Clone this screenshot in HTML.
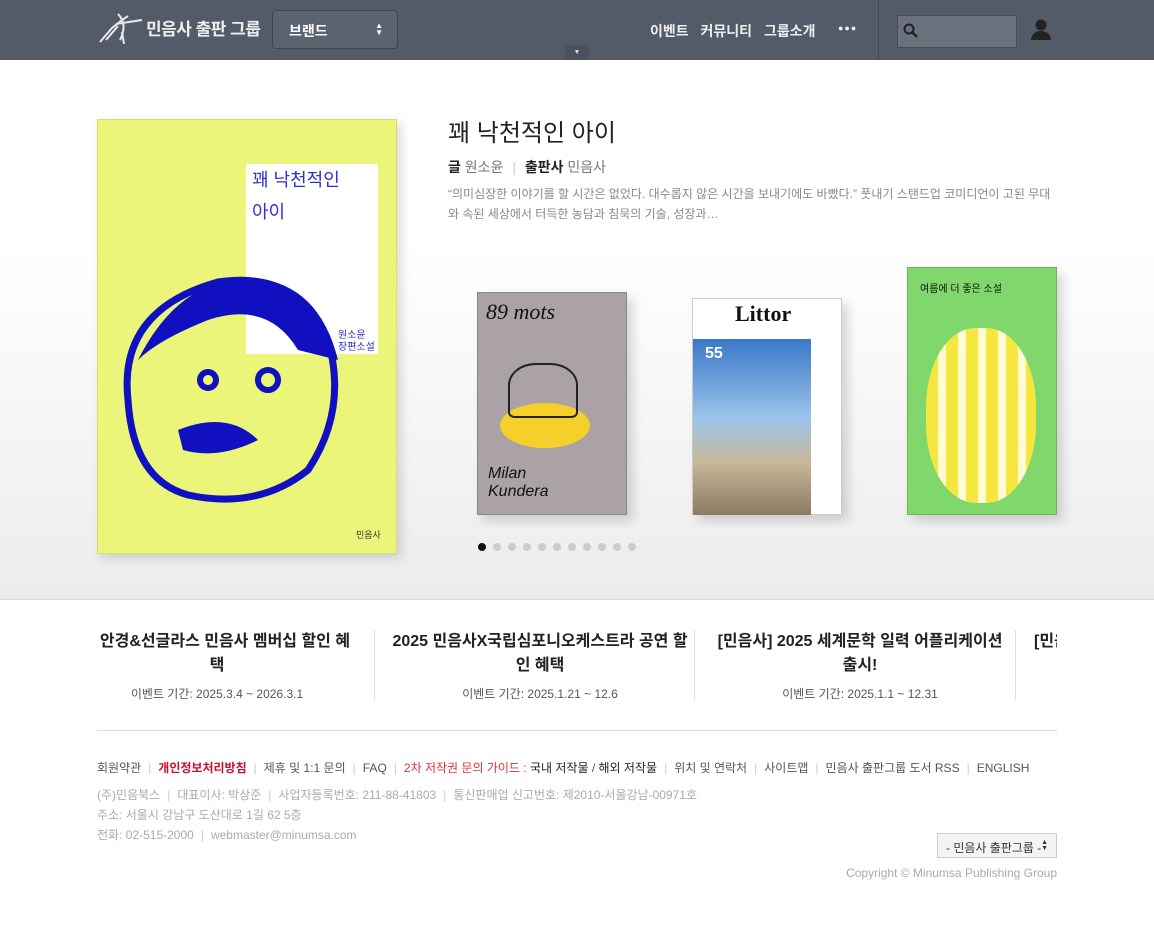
<!DOCTYPE html>
<html><head><meta charset="utf-8"><style>
*{margin:0;padding:0;box-sizing:border-box}
body{width:1154px;height:952px;overflow:hidden;font-family:"Liberation Sans","Noto Sans CJK KR",sans-serif;background:#fff;position:relative;color:#333}
.hdr{position:absolute;left:0;top:0;width:1154px;height:60px;background:#535a68}
.abs{position:absolute}
.main{position:absolute;top:60px;left:0;width:1154px;height:540px;background:linear-gradient(#fff 0%,#fff 35%,#ececec 100%);border-bottom:1px solid #d8d8d8}
.dot{position:absolute;top:483px;width:8px;height:8px;border-radius:50%;background:#ccc}
.ev{position:absolute;top:10px;width:320px;text-align:center}
.ev b{display:block;font-size:16px;color:#222;line-height:24px}
.ev span{display:block;font-size:12px;color:#555;margin-top:7px}
.ft{font-size:12px;color:#555;white-space:nowrap}
.ft i{font-style:normal;color:#ccc;margin:0 7px}
.g{color:#aaa}
</style></head><body>
<div class="hdr">
 <svg class="abs" style="left:98px;top:10px" width="46" height="34" viewBox="0 0 46 34"><g stroke="#e8e8e8" stroke-width="2" fill="none"><path d="M2 32 L14 18 L24 10 L30 6"/><path d="M8 30 L20 16"/><path d="M20 4 Q30 14 22 30"/><path d="M18 14 L44 10"/><path d="M24 22 L26 34"/></g></svg>
 <div class="abs" style="left:146px;top:15px;font-size:17px;font-weight:bold;color:#eee;letter-spacing:-0.5px">민음사 출판 그룹</div>
 <div class="abs" style="left:272px;top:10px;width:126px;height:39px;border:1px solid #3f4550;border-radius:4px;background:#5b6270;color:#fff;font-size:14px;font-weight:bold;padding:10px 0 0 16px">브랜드<span style="position:absolute;right:14px;top:11px;font-size:8px;line-height:7px">▲<br>▼</span></div>
 <div class="abs" style="left:565px;top:45px;width:24px;height:15px;background:#4a505d;border-radius:3px 3px 0 0;color:#ddd;font-size:7px;text-align:center;line-height:15px">▼</div>
 <div class="abs" style="left:650px;top:21px;font-size:14px;font-weight:bold;color:#eee;word-spacing:8px">이벤트 커뮤니티 그룹소개</div>
 <div class="abs" style="left:838px;top:23px;font-size:9px;color:#eee;letter-spacing:1px">●●●</div>
 <div class="abs" style="left:878px;top:0;width:1px;height:60px;background:#434955"></div>
 <div class="abs" style="left:897px;top:15px;width:120px;height:33px;background:#6a717d;border:1px solid #474d58"></div>
 <svg class="abs" style="left:903px;top:23px" width="16" height="16"><circle cx="6" cy="6" r="4.5" stroke="#222" stroke-width="2" fill="none"/><path d="M9 9 L14 14" stroke="#222" stroke-width="2.5"/></svg>
 <svg class="abs" style="left:1031px;top:19px" width="20" height="22"><circle cx="10" cy="6" r="5.5" fill="#222"/><path d="M0 21 Q1 12 10 12 Q19 12 20 21Z" fill="#222"/></svg>
</div>
<div class="main">
 <div class="abs" style="left:97px;top:59px;width:300px;height:435px;background:#eaf57a;border:1px solid #d8df70;box-shadow:4px 4px 10px rgba(0,0,0,.15);overflow:hidden">
  <div class="abs" style="left:148px;top:44px;width:132px;height:190px;background:#fff"></div>
  <div class="abs" style="left:154px;top:44px;font-size:18px;color:#3030d0;line-height:32px">꽤 낙천적인<br>아이</div>
  <div class="abs" style="left:240px;top:210px;font-size:10px;color:#3030c0;line-height:12px">원소윤<br>장편소설</div>
  <svg class="abs" style="left:0;top:150px" width="260" height="240"><path d="M30 130 Q20 40 120 12 Q200 0 230 70 Q250 140 210 200 Q160 240 90 225 Q35 210 30 130Z" fill="none" stroke="#1010c0" stroke-width="7"/><path d="M40 90 Q80 10 150 8 Q220 10 240 90 L200 80 Q170 30 110 50 Q60 70 40 90Z" fill="#1010c0"/><circle cx="170" cy="110" r="10" fill="none" stroke="#1010c0" stroke-width="6"/><circle cx="110" cy="110" r="8" fill="none" stroke="#1010c0" stroke-width="6"/><path d="M80 160 Q130 140 160 170 Q120 190 85 180Z" fill="#1010c0"/></svg>
  <div class="abs" style="left:258px;top:408px;font-size:9px;color:#333">민음사</div>
 </div>
 <div class="abs" style="left:448px;top:53px;font-size:24px;color:#222">꽤 낙천적인 아이</div>
 <div class="abs" style="left:448px;top:97px;font-size:14px;color:#777"><b style="color:#222">글</b> 원소윤 <span style="color:#ccc;margin:0 5px">|</span> <b style="color:#222">출판사</b> 민음사</div>
 <div class="abs" style="left:448px;top:124px;width:610px;font-size:12px;color:#888;line-height:20px">“의미심장한 이야기를 할 시간은 없었다. 대수롭지 않은 시간을 보내기에도 바빴다.” 풋내기 스탠드업 코미디언이 고된 무대와 속된 세상에서 터득한 농담과 침묵의 기술, 성장과…</div>
 <div class="abs" style="left:477px;top:232px;width:150px;height:223px;background:#aba2a6;border:1px solid #888;box-shadow:6px 6px 10px rgba(0,0,0,.15)">
  <div class="abs" style="left:8px;top:6px;font-size:22px;font-style:italic;color:#111;font-family:'Liberation Serif',serif">89 mots</div>
  <div class="abs" style="left:22px;top:110px;width:90px;height:45px;border-radius:50%;background:#f5d02a"></div>
  <div class="abs" style="left:30px;top:70px;width:70px;height:55px;border:2px solid #222;border-radius:40% 40% 10% 10%"></div>
  <div class="abs" style="left:10px;top:172px;font-size:16px;font-style:italic;color:#111;line-height:18px">Milan<br>Kundera</div>
 </div>
 <div class="abs" style="left:692px;top:238px;width:150px;height:217px;background:#fff;border:1px solid #ccc;box-shadow:6px 6px 10px rgba(0,0,0,.15)">
  <div class="abs" style="left:42px;top:2px;font-size:22px;font-weight:bold;color:#111;font-family:'Liberation Serif',serif">Littor</div>
  <div class="abs" style="left:0;top:40px;width:118px;height:176px;background:linear-gradient(#3a78c8 0%,#9cc4ea 45%,#c8b89a 70%,#8a7a60 100%)"></div>
  <div class="abs" style="left:12px;top:46px;font-size:16px;font-weight:bold;color:#fff">55</div>
 </div>
 <div class="abs" style="left:907px;top:207px;width:150px;height:248px;background:#80d86c;border:1px solid #6bb85a;box-shadow:6px 6px 10px rgba(0,0,0,.15)">
  <div class="abs" style="left:12px;top:12px;font-size:10px;color:#111">여름에 더 좋은 소설</div>
  <div class="abs" style="left:18px;top:60px;width:110px;height:175px;border-radius:45%;background:repeating-linear-gradient(90deg,#f5e640 0 12px,#fffbd0 12px 20px)"></div>
 </div>
 <div class="dot" style="left:478px;background:#111"></div>
 <div class="dot" style="left:493px"></div><div class="dot" style="left:508px"></div><div class="dot" style="left:523px"></div><div class="dot" style="left:538px"></div><div class="dot" style="left:553px"></div><div class="dot" style="left:568px"></div><div class="dot" style="left:583px"></div><div class="dot" style="left:598px"></div><div class="dot" style="left:613px"></div><div class="dot" style="left:628px"></div>
</div>
<div style="position:absolute;left:97px;top:620px;width:960px;height:90px;overflow:hidden">
 <div class="ev" style="left:-40px"><b>N 안경&amp;선글라스 민음사 멤버십 할인 혜<br>택</b><span>이벤트 기간: 2025.3.4 ~ 2026.3.1</span></div>
 <div class="abs" style="left:277px;top:10px;width:1px;height:70px;background:#ddd"></div>
 <div class="ev" style="left:283px"><b>2025 민음사X국립심포니오케스트라 공연 할<br>인 혜택</b><span>이벤트 기간: 2025.1.21 ~ 12.6</span></div>
 <div class="abs" style="left:597px;top:10px;width:1px;height:70px;background:#ddd"></div>
 <div class="ev" style="left:603px"><b>[민음사] 2025 세계문학 일력 어플리케이션<br>출시!</b><span>이벤트 기간: 2025.1.1 ~ 12.31</span></div>
 <div class="abs" style="left:918px;top:10px;width:1px;height:70px;background:#ddd"></div>
 <div class="ev" style="left:937px;text-align:left"><b>[민음</b></div>
</div>
<div class="abs" style="left:97px;top:730px;width:960px;height:1px;background:#ddd"></div>
<div class="abs ft" style="left:97px;top:759px">회원약관<i>|</i><b style="color:#c8102e">개인정보처리방침</b><i>|</i>제휴 및 1:1 문의<i>|</i>FAQ<i>|</i><span style="color:#e0303a">2차 저작권 문의 가이드 : </span><span style="color:#222">국내 저작물</span> / <span style="color:#222">해외 저작물</span><i>|</i>위치 및 연락처<i>|</i>사이트맵<i>|</i>민음사 출판그룹 도서 RSS<i>|</i>ENGLISH</div>
<div class="abs ft g" style="left:97px;top:785px;line-height:20px">(주)민음북스<i>|</i>대표이사: 박상준<i>|</i>사업자등록번호: 211-88-41803<i>|</i>통신판매업 신고번호: 제2010-서울강남-00971호<br>주소: 서울시 강남구 도산대로 1길 62 5층<br>전화: 02-515-2000<i>|</i>webmaster@minumsa.com</div>
<div class="abs" style="left:937px;top:833px;width:120px;height:25px;border:1px solid #ccc;background:#f4f4f4;font-size:12px;color:#333;padding:5px 0 0 8px">- 민음사 출판그룹 -<span style="position:absolute;right:8px;top:6px;font-size:7px;line-height:6px">▲<br>▼</span></div>
<div class="abs ft g" style="right:97px;top:866px">Copyright © Minumsa Publishing Group</div>
</body></html>
